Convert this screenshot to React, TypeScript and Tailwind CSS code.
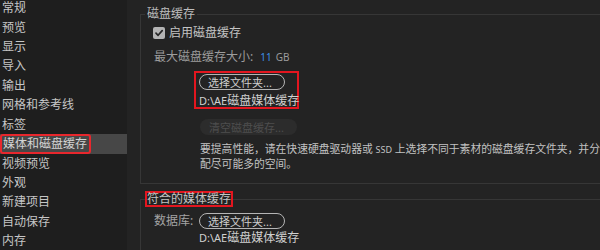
import React from "react";

const FONT = '"Noto Sans", "Noto Sans CJK SC", sans-serif';

const navItems = [
  "常规",
  "预览",
  "显示",
  "导入",
  "输出",
  "网格和参考线",
  "标签",
  "媒体和磁盘缓存",
  "视频预览",
  "外观",
  "新建项目",
  "自动保存",
  "内存",
];

const ACTIVE = "媒体和磁盘缓存";

function PillButton({ label, disabled }: { label: string; disabled?: boolean }) {
  if (disabled) {
    return (
      <div className="flex h-[16px] w-[97px] items-center rounded-full bg-[#2c2c2c] pl-[9px] text-[11px] leading-none text-[#4e4e4e]">
        {label}
      </div>
    );
  }
  return (
    <div className="flex h-[16px] w-[86px] items-center rounded-full border-[1.5px] border-[#b5b5b5] pl-[8px] text-[11px] leading-none text-[#cdcdcd]">
      {label}
    </div>
  );
}

function PathText() {
  return (
    <div className="h-[13px] whitespace-nowrap text-[12px] leading-[13px] text-[#d0d0d0]">
      <span className="text-[11px]">D:\AE</span>磁盘媒体缓存
    </div>
  );
}

function Sidebar() {
  return (
    <div className="w-[127px] shrink-0 bg-[#1e1e1e] pt-0">
      <div className="mt-[-1.7px]">
        {navItems.map((item) => {
          const active = item === ACTIVE;
          return (
            <div
              key={item}
              className={
                active
                  ? "h-[19.6px] bg-[#474747] text-[12px] leading-[19.6px] text-[#d4d4d4]"
                  : "h-[19.4px] pl-[2px] text-[12px] leading-[19.4px] text-[#c6c6c6]"
              }
            >
              {active ? (
                <span className="inline-block h-[20px] rounded-[3px] border-2 border-[#e8272d] pl-[1px] pr-[2px] leading-[16px]">
                  {item}
                </span>
              ) : (
                item
              )}
            </div>
          );
        })}
      </div>
    </div>
  );
}

function DiskCache() {
  return (
    <fieldset className="mt-[6px] w-[560px] border border-[#363636] pb-[13px]">
      <legend className="ml-[4px] px-[2px] text-[12px] leading-[16px] text-[#bdbdbd]">
        磁盘缓存
      </legend>

      <div className="mt-[4px] flex h-[14px] items-center pl-[12px]">
        <div className="flex h-[12px] w-[12px] items-center justify-center rounded-[2px] bg-[#b4b4b4]">
          <svg width="10" height="10" viewBox="0 0 10 10" fill="none">
            <polyline
              points="2,5.2 4.1,7.3 8.2,2.6"
              stroke="#262626"
              strokeWidth="1.7"
              strokeLinecap="round"
              strokeLinejoin="round"
            />
          </svg>
        </div>
        <span className="ml-[4px] text-[12px] leading-none text-[#c4c4c4]">启用磁盘缓存</span>
      </div>

      <div className="mt-[10px] flex h-[14px] items-center pl-[13px] text-[12px] leading-none text-[#9c9c9c]">
        <span>最大磁盘缓存大小:</span>
        <span className="ml-[7px] text-[10px] text-[#3d8fe3]">11</span>
        <span className="ml-[4px] text-[10px] text-[#9c9c9c]">GB</span>
      </div>

      <div className="ml-[53px] mt-[7px] w-[105px] border-2 border-[#e3161f] pl-[3px] pt-[1px]">
        <PillButton label="选择文件夹..." />
        <div className="mt-[4px]">
          <PathText />
        </div>
      </div>

      <div className="ml-[59px] mt-[10px]">
        <PillButton label="清空磁盘缓存..." disabled />
      </div>

      <div className="ml-[59px] mt-[7px] whitespace-nowrap text-[10.8px] leading-[13.5px] text-[#c2c2c2]">
        要提高性能，请在快速硬盘驱动器或 <span className="text-[9px]">SSD</span> 上选择不同于素材的磁盘缓存文件夹，并分
        <br />
        配尽可能多的空间。
      </div>
    </fieldset>
  );
}

function ConformedCache() {
  return (
    <fieldset className="mt-[7px] w-[560px] border border-[#363636] pb-[20px]">
      <legend className="ml-[4px] border-2 border-[#e3161f] px-0 text-[12px] leading-[12px] text-[#c4c4c4]">
        符合的媒体缓存
      </legend>

      <div className="mt-[6px] flex h-[16px] items-center pl-[13px]">
        <span className="w-[45px] text-[12px] leading-none text-[#a4a4a4]">数据库:</span>
        <PillButton label="选择文件夹..." />
      </div>

      <div className="ml-[58px] mt-[2px]">
        <PathText />
      </div>
    </fieldset>
  );
}

export default function App() {
  return (
    <div
      className="flex h-[250px] w-[600px] overflow-hidden bg-[#232323]"
      style={{ fontFamily: FONT }}
    >
      <Sidebar />
      <div className="min-w-0 flex-1 overflow-hidden pl-[13px]">
        <DiskCache />
        <ConformedCache />
      </div>
    </div>
  );
}
